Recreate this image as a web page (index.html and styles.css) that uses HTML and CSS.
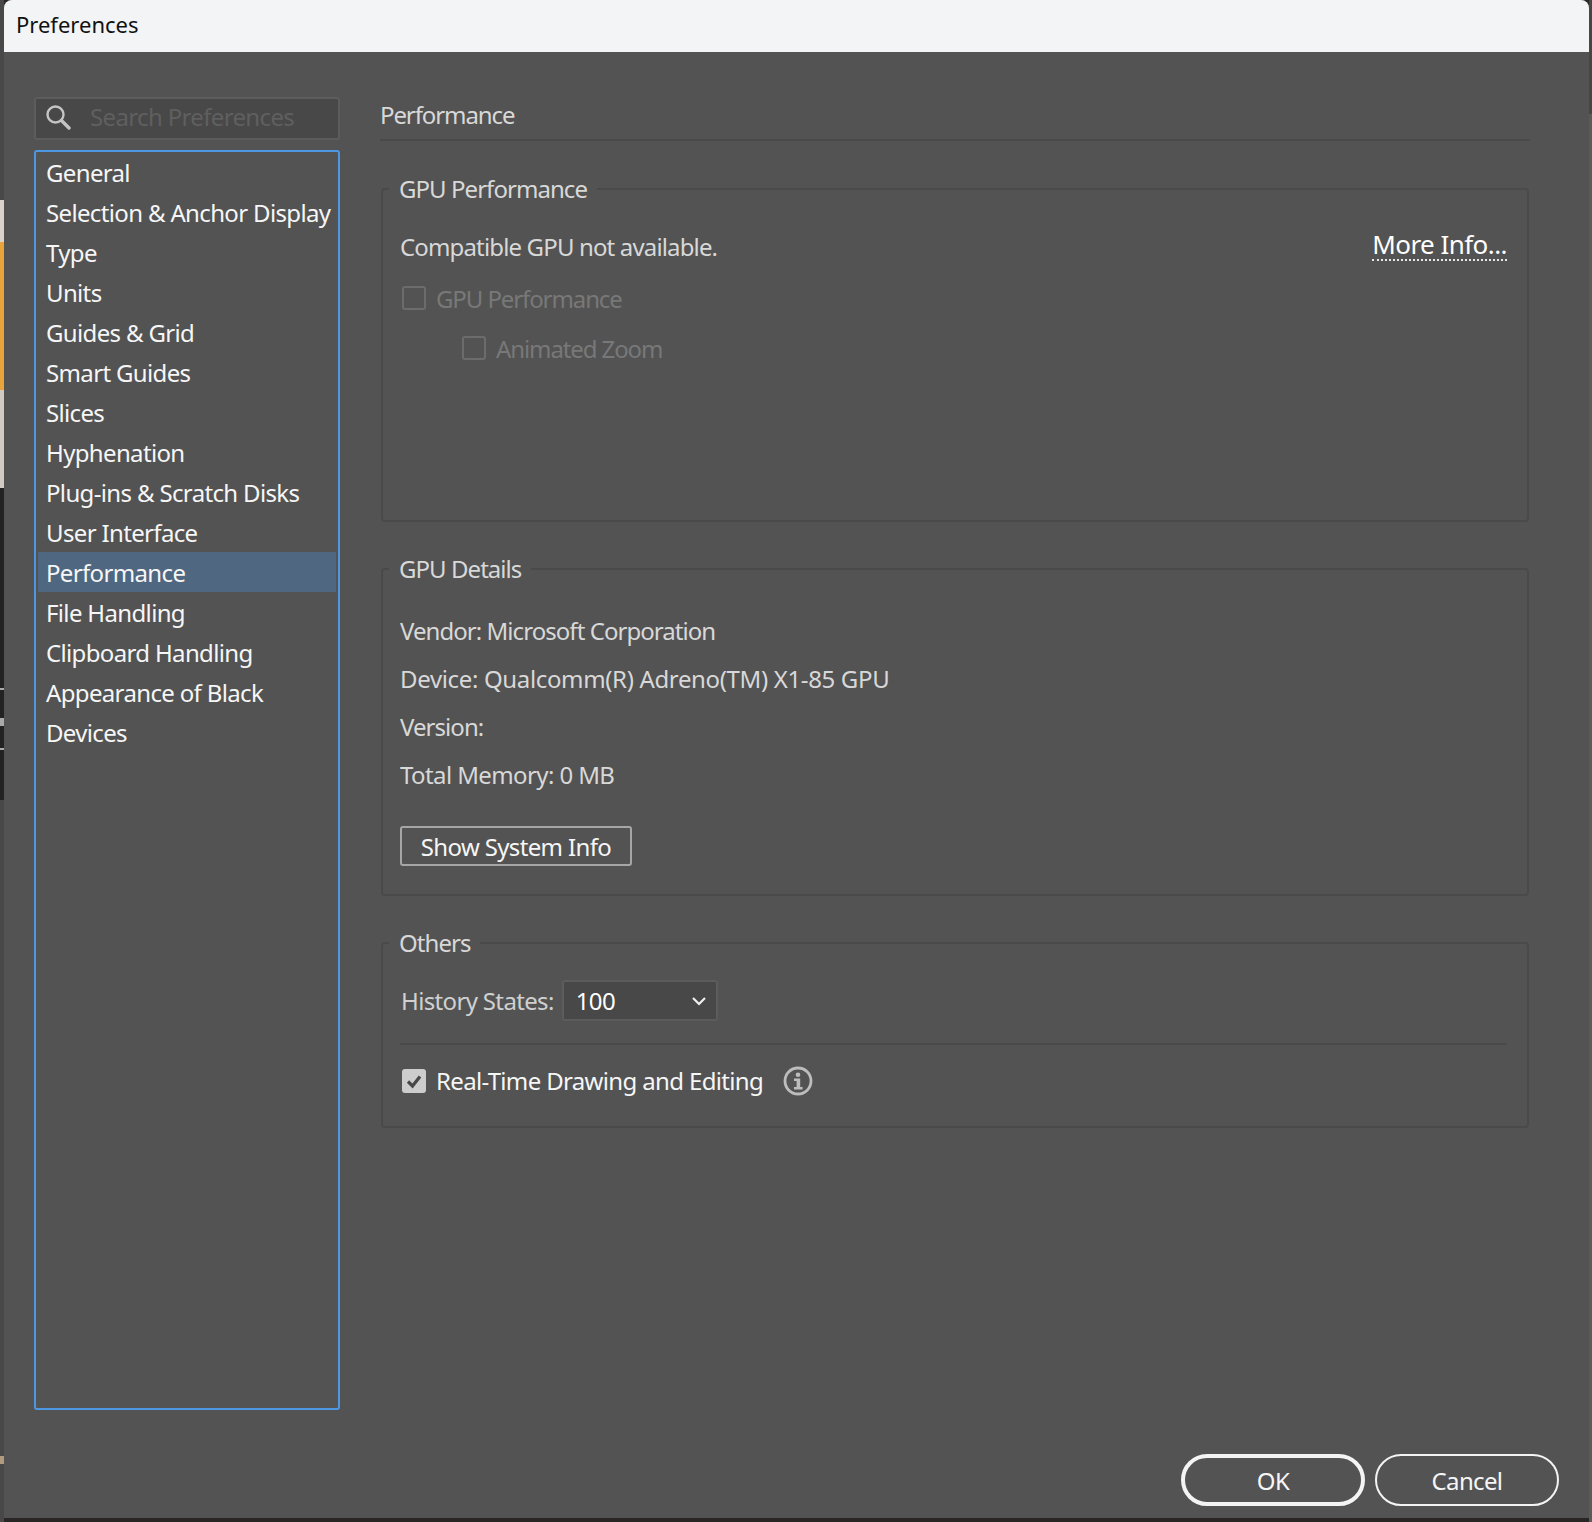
FILE: index.html
```html
<!DOCTYPE html>
<html>
<head>
    <title>Preferences</title>
    <meta name="viewport" content="width=device-width, initial-scale=1.0">
    <link rel="stylesheet" href="styles.css">
</head>
<body>
    <!-- Restos de la ventana de atrás -->
    <div class="backdrop">
        <div class="strip strip-light"></div>
        <div class="strip strip-orange"></div>
        <div class="strip strip-pale"></div>
        <div class="strip strip-dark"></div>
        <div class="strip strip-tick tick-a"></div>
        <div class="strip strip-tick tick-b"></div>
        <div class="strip strip-tick tick-c"></div>
        <div class="strip strip-tan"></div>
    </div>
    <div class="backdrop-right">
        <div class="edge-dark"></div>
    </div>

    <div class="dialog">
        <div class="titlebar">Preferences</div>

        <div class="dialog-body">
            <!-- Columna izquierda -->
            <div class="sidebar">
                <div class="search">
                    <svg class="search-icon" viewBox="0 0 26 26" width="26" height="26">
                        <circle cx="10.5" cy="10.5" r="8" fill="none" stroke="#c4c4c4" stroke-width="2.4"/>
                        <path d="M16.5 16.5 L24 24" stroke="#c4c4c4" stroke-width="3.4" stroke-linecap="round"/>
                    </svg>
                    <span class="search-text">Search Preferences</span>
                </div>
                <div class="nav-list">
                    <div class="nav-item">General</div>
                    <div class="nav-item">Selection &amp; Anchor Display</div>
                    <div class="nav-item">Type</div>
                    <div class="nav-item">Units</div>
                    <div class="nav-item">Guides &amp; Grid</div>
                    <div class="nav-item">Smart Guides</div>
                    <div class="nav-item">Slices</div>
                    <div class="nav-item">Hyphenation</div>
                    <div class="nav-item">Plug-ins &amp; Scratch Disks</div>
                    <div class="nav-item">User Interface</div>
                    <div class="nav-item selected">Performance</div>
                    <div class="nav-item">File Handling</div>
                    <div class="nav-item">Clipboard Handling</div>
                    <div class="nav-item">Appearance of Black</div>
                    <div class="nav-item">Devices</div>
                </div>
            </div>

            <!-- Panel derecho -->
            <div class="content">
                <div class="page-title">Performance</div>

                <div class="group group-gpu">
                    <div class="legend">GPU Performance</div>
                    <div class="gpu-status">
                        <span class="status-text">Compatible GPU not available.</span>
                        <span class="more-info">More Info...</span>
                    </div>
                    <div class="check-row disabled first">
                        <span class="checkbox"></span>
                        <span>GPU Performance</span>
                    </div>
                    <div class="check-row disabled indented">
                        <span class="checkbox"></span>
                        <span>Animated Zoom</span>
                    </div>
                </div>

                <div class="group group-details">
                    <div class="legend">GPU Details</div>
                    <div class="detail">Vendor: Microsoft Corporation</div>
                    <div class="detail wide">Device: Qualcomm(R) Adreno(TM) X1-85 GPU</div>
                    <div class="detail">Version:</div>
                    <div class="detail memory">Total Memory: 0 MB</div>
                    <div class="system-btn">Show System Info</div>
                </div>

                <div class="group group-others">
                    <div class="legend">Others</div>
                    <div class="history-row">
                        <span>History States:</span>
                        <div class="select">
                            <span>100</span>
                            <svg viewBox="0 0 16 10" width="16" height="10">
                                <path d="M2 2 L8 8 L14 2" fill="none" stroke="#f0f0f0" stroke-width="2.2"/>
                            </svg>
                        </div>
                    </div>
                    <div class="divider"></div>
                    <div class="check-row realtime">
                        <span class="checkbox checked">
                            <svg viewBox="0 0 24 24" width="24" height="24">
                                <path d="M6 12.5 L10.5 17 L18 7.5" fill="none" stroke="#484848" stroke-width="3.2"/>
                            </svg>
                        </span>
                        <span class="realtime-label">Real-Time Drawing and Editing</span>
                        <svg class="info-icon" viewBox="0 0 30 30" width="30" height="30">
                            <circle cx="15" cy="15" r="13" fill="none" stroke="#bdbdbd" stroke-width="2.8"/>
                            <circle cx="15" cy="8.8" r="2.3" fill="#bdbdbd"/>
                            <path d="M11 12.6 H17.2 V21 H19.6 V23.4 H11 V21 H13.6 V15 H11 Z" fill="#bdbdbd"/>
                        </svg>
                    </div>
                </div>
            </div>
        </div>

        <div class="dialog-footer">
            <div class="pill-btn primary">OK</div>
            <div class="pill-btn">Cancel</div>
        </div>
    </div>
</body>
</html>
```

FILE: styles.css
```css
body {
    margin: 0;
    padding: 0;
    width: 1592px;
    height: 1522px;
    background-color: #2a2626;
    color: #fff;
    font-family: 'Noto Sans', sans-serif;
    font-size: 24px;
    letter-spacing: -0.65px;
    overflow: hidden;
    position: relative;
}

/* Ventana de atrás */
.backdrop {
    position: absolute;
    left: 0;
    top: 0;
    width: 4px;
    height: 100%;
    background: #484848;
}

.strip {
    position: absolute;
    left: 0;
    width: 4px;
}

.strip-light {
    top: 200px;
    height: 42px;
    background: #d8d4cc;
}

.strip-orange {
    top: 242px;
    height: 148px;
    background: #e8a33a;
}

.strip-pale {
    top: 390px;
    height: 98px;
    background: #d0ccc4;
}

.strip-dark {
    top: 488px;
    height: 312px;
    background: #222;
}

.strip-tick {
    height: 2px;
    background: #aaa;
}

.tick-a {
    top: 688px;
}

.tick-b {
    top: 718px;
    height: 8px;
}

.tick-c {
    top: 748px;
}

.strip-tan {
    top: 1456px;
    height: 8px;
    background: #b09a80;
}

.backdrop-right {
    position: absolute;
    right: 0;
    top: 0;
    width: 3px;
    height: 100%;
    background: #5a5a5a;
}

.edge-dark {
    height: 114px;
    background: #464646;
}

/* Ventana */
.dialog {
    position: relative;
    margin-left: 4px;
    width: 1585px;
    height: 1518px;
    background: #535353;
    display: flex;
    flex-direction: column;
    border-radius: 8px 8px 0 0;
    overflow: hidden;
}

.titlebar {
    box-sizing: border-box;
    height: 52px;
    flex-shrink: 0;
    background: #f3f4f6;
    color: #111;
    display: flex;
    align-items: center;
    padding: 0 0 4px 12px;
    font-size: 22px;
    letter-spacing: 0;
}

.dialog-body {
    display: flex;
    flex: 1;
    padding: 45px 0 0 30px;
    min-height: 0;
}

/* Columna izquierda */
.sidebar {
    width: 306px;
    flex-shrink: 0;
    display: flex;
    flex-direction: column;
    gap: 10px;
}

.search {
    box-sizing: border-box;
    height: 43px;
    display: flex;
    align-items: center;
    gap: 19px;
    padding: 0 0 4px 9px;
    background: #484848;
    border: 2px solid #5c5c5c;
    border-radius: 3px;
}

.search-text {
    color: #5f5f5f;
}

.nav-list {
    box-sizing: border-box;
    height: 1260px;
    padding: 0 2px;
    border: 2px solid #4e97e4;
    border-radius: 3px;
}

.nav-item {
    height: 40px;
    line-height: 42px;
    padding-left: 8px;
    color: #f6f6f6;
    white-space: nowrap;
}

.nav-item.selected {
    background: #4f6780;
}

/* Panel derecho */
.content {
    width: 1150px;
    margin-left: 40px;
    display: flex;
    flex-direction: column;
}

.page-title {
    box-sizing: border-box;
    height: 44px;
    line-height: 35px;
    letter-spacing: -1.1px;
    color: #d8d8d8;
    border-bottom: 2px solid #4a4a4a;
}

.group {
    position: relative;
    box-sizing: border-box;
    margin-left: 1px;
    width: 1148px;
    padding: 0 20px 0 17px;
    border: 2px solid #4a4a4a;
    border-radius: 4px;
}

.group-gpu {
    margin-top: 47px;
    height: 334px;
}

.group-details {
    margin-top: 46px;
    height: 328px;
}

.group-others {
    margin-top: 46px;
    height: 186px;
}

.legend {
    position: absolute;
    left: 6px;
    top: -19px;
    padding: 0 10px;
    height: 36px;
    line-height: 36px;
    letter-spacing: -0.95px;
    background: #535353;
    color: #d8d8d8;
}

.gpu-status {
    display: flex;
    justify-content: space-between;
    align-items: center;
    padding-top: 39px;
    height: 34px;
    color: #d8d8d8;
}

.status-text {
    letter-spacing: -0.85px;
}

.more-info {
    color: #fff;
    font-size: 26px;
    line-height: 30px;
    letter-spacing: -0.55px;
    margin-bottom: 2px;
    border-bottom: 2px dotted #e8e8e8;
}

.check-row {
    display: flex;
    align-items: center;
    gap: 10px;
    height: 24px;
    margin-left: 2px;
    color: #f6f6f6;
    white-space: nowrap;
}

.check-row.disabled {
    color: #787878;
    letter-spacing: -1.1px;
    margin-top: 26px;
}

.check-row.disabled.first {
    margin-top: 23px;
}

.check-row.indented {
    margin-left: 62px;
}

.checkbox {
    box-sizing: border-box;
    width: 24px;
    height: 24px;
    flex-shrink: 0;
    border: 2px solid #6c6c6c;
    border-radius: 3px;
}

.checkbox.checked {
    border: none;
    background: #cdcdcd;
}

.checkbox svg {
    display: block;
}

.detail {
    height: 48px;
    line-height: 48px;
    letter-spacing: -0.95px;
    color: #d8d8d8;
}

.detail.wide {
    letter-spacing: -0.35px;
}

.detail.memory {
    letter-spacing: -0.6px;
}

.group-details .detail:nth-of-type(2) {
    margin-top: 37px;
}

.system-btn {
    box-sizing: border-box;
    display: flex;
    align-items: center;
    justify-content: center;
    width: 232px;
    height: 40px;
    margin-top: 27px;
    color: #f6f6f6;
    border: 2px solid #a6a6a6;
    border-radius: 3px;
}

.history-row {
    display: flex;
    align-items: center;
    gap: 8px;
    padding: 36px 0 0 1px;
    color: #d0d0d0;
}

.select {
    box-sizing: border-box;
    width: 156px;
    height: 41px;
    display: flex;
    align-items: center;
    justify-content: space-between;
    padding: 0 9px 0 12px;
    background: #484848;
    border: 2px solid #5c5c5c;
    border-radius: 3px;
    color: #fff;
}

.divider {
    height: 2px;
    margin-top: 22px;
    background: #4a4a4a;
}

.realtime {
    margin-top: 24px;
}

.realtime-label {
    padding-bottom: 2px;
}

.info-icon {
    margin-left: 10px;
}

/* Botones de abajo */
.dialog-footer {
    display: flex;
    justify-content: flex-end;
    gap: 10px;
    padding: 0 30px 12px 0;
}

.pill-btn {
    box-sizing: border-box;
    width: 184px;
    height: 52px;
    display: flex;
    align-items: center;
    justify-content: center;
    border: 2px solid #f4f4f4;
    border-radius: 26px;
    color: #f6f6f6;
}

.pill-btn.primary {
    border-width: 4px;
}
```
